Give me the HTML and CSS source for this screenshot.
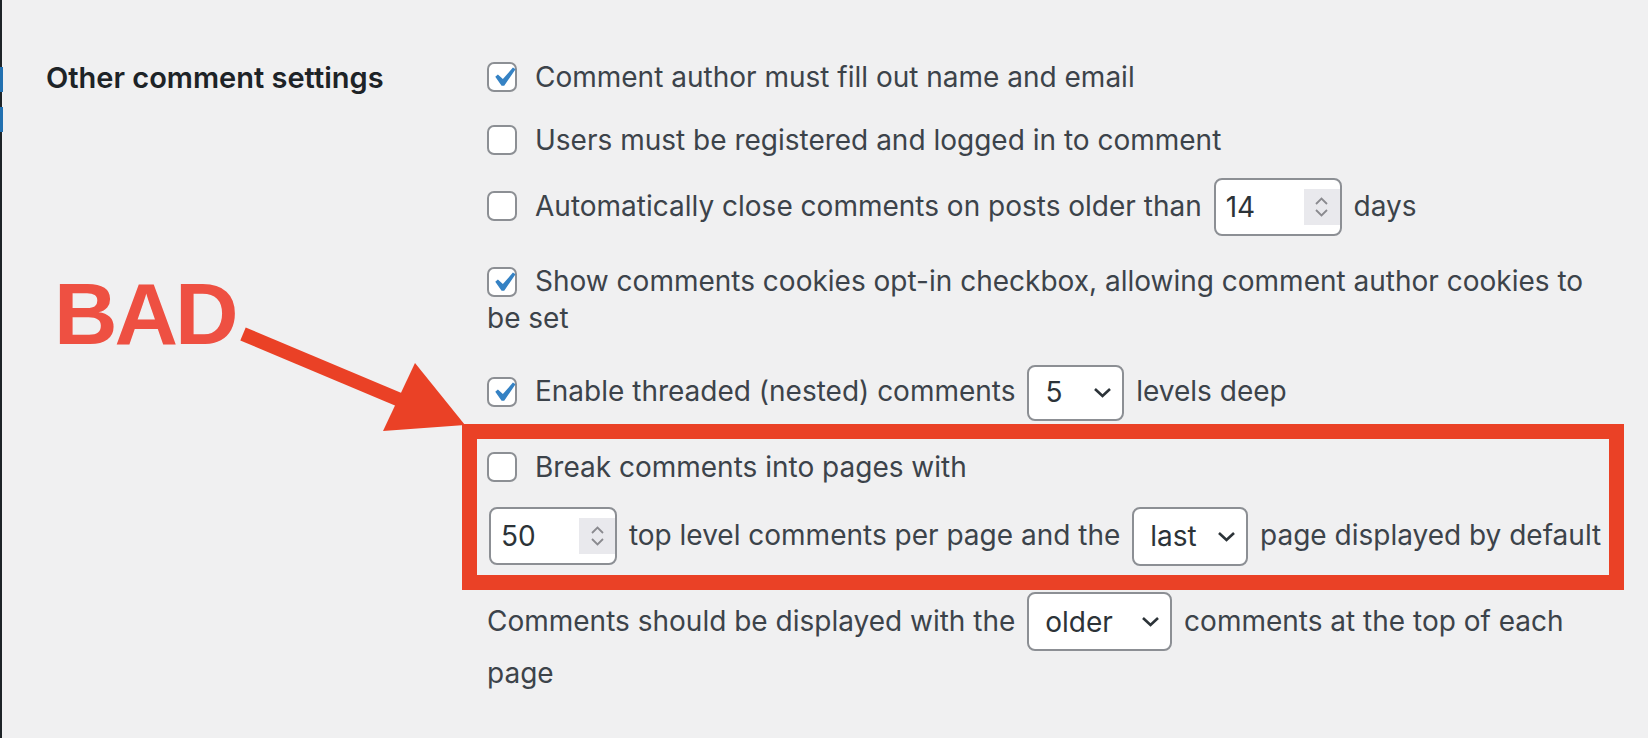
FILE: index.html
```html
<!DOCTYPE html>
<html lang="en">
<head>
  <meta charset="UTF-8" />
  <title>Discussion Settings</title>
  <link rel="stylesheet" href="styles.css">
</head>
<body>
  <div class="wrap">
    <div class="admin-edge">
      <span class="edge-mark"></span>
      <span class="edge-mark"></span>
    </div>

    <div class="form-table">
      <div class="row-title">Other comment settings</div>

      <div class="fieldset">
        <label class="opt gap-26">
          <span class="checkbox"><svg class="tick" viewBox="0 0 20 20"><path d="M14.83 4.89l1.34.94-5.81 8.38H9.02L5.78 9.67l1.34-1.25 2.57 2.4z"/></svg></span>Comment author must fill out name and email
        </label>

        <label class="opt gap-29">
          <span class="checkbox"></span>Users must be registered and logged in to comment
        </label>

        <label class="opt gap-37">
          <span class="checkbox"></span>Automatically close comments on posts older than
          <span class="number-input">14<span class="spin">
            <svg width="15" height="10" viewBox="0 0 15 10"><path d="M2 8 L7.5 2.5 L13 8" fill="none" stroke="#8a8a8f" stroke-width="1.8"/></svg>
            <svg width="15" height="10" viewBox="0 0 15 10"><path d="M2 2 L7.5 7.5 L13 2" fill="none" stroke="#8a8a8f" stroke-width="1.8"/></svg>
          </span></span>
          days
        </label>

        <label class="opt gap-36">
          <span class="checkbox"><svg class="tick" viewBox="0 0 20 20"><path d="M14.83 4.89l1.34.94-5.81 8.38H9.02L5.78 9.67l1.34-1.25 2.57 2.4z"/></svg></span>Show comments cookies opt-in checkbox, allowing comment author cookies to be set
        </label>

        <label class="opt gap-37">
          <span class="checkbox"><svg class="tick" viewBox="0 0 20 20"><path d="M14.83 4.89l1.34.94-5.81 8.38H9.02L5.78 9.67l1.34-1.25 2.57 2.4z"/></svg></span>Enable threaded (nested) comments
          <span class="select select-depth">5<svg width="19" height="11" viewBox="0 0 19 11"><path d="M2 2 L9.5 9 L17 2" fill="none" stroke="#2c3338" stroke-width="2.6"/></svg></span>
          levels deep
        </label>

        <label class="opt gap-31">
          <span class="checkbox"></span>Break comments into pages with
        </label>

        <div class="opt gap-39 nowrap">
          <span class="number-input first">50<span class="spin">
            <svg width="15" height="10" viewBox="0 0 15 10"><path d="M2 8 L7.5 2.5 L13 8" fill="none" stroke="#8a8a8f" stroke-width="1.8"/></svg>
            <svg width="15" height="10" viewBox="0 0 15 10"><path d="M2 2 L7.5 7.5 L13 2" fill="none" stroke="#8a8a8f" stroke-width="1.8"/></svg>
          </span></span>
          top level comments per page and the
          <span class="select select-page">last<svg width="19" height="11" viewBox="0 0 19 11"><path d="M2 2 L9.5 9 L17 2" fill="none" stroke="#2c3338" stroke-width="2.6"/></svg></span>
          page displayed by default
        </div>

        <div class="opt tall">
          <span>Comments should be displayed with the</span>
          <span class="select select-order">older<svg width="19" height="11" viewBox="0 0 19 11"><path d="M2 2 L9.5 9 L17 2" fill="none" stroke="#2c3338" stroke-width="2.6"/></svg></span>
          <span>comments at the top of each</span> <span>page</span>
        </div>
      </div>
    </div>

    <!-- annotation drawn over the screenshot -->
    <div class="note-text">BAD</div>
    <svg class="note-arrow" width="1648" height="738" viewBox="0 0 1648 738">
      <polygon points="245.7,327.5 240.3,340.5 397.3,406.5 402.7,393.5" />
      <polygon points="465,425 383,431 415,363" />
    </svg>
    <div class="note-box"></div>
  </div>
</body>
</html>
```

FILE: styles.css
```css
body {
  margin: 0;
  background: #f0f0f1;
  font-family: Inter, "Noto Sans", sans-serif;
  color: #3c434a;
}

.wrap {
  position: relative;
  display: flex;
  height: 738px;
  overflow: hidden;
}

/* dark admin menu edge on the left */
.admin-edge {
  width: 2px;
  flex-shrink: 0;
  background: #1d2327;
  padding-top: 67px;
  display: flex;
  flex-direction: column;
  gap: 15px;
}

.edge-mark {
  width: 3px;
  height: 25px;
  background: #2271b1;
}

.form-table {
  display: flex;
  padding-left: 44px;
}

.row-title {
  width: 441px;
  padding-top: 59px;
  font-size: 29px;
  line-height: 37px;
  font-weight: 600;
  color: #1d2327;
}

.fieldset {
  width: 1125px;
  padding-top: 59px;
  font-size: 28px;
  line-height: 37px;
}

.opt {
  display: block;
}

.gap-26 { margin-bottom: 26px; }
.gap-29 { margin-bottom: 29px; }
.gap-31 { margin-bottom: 31px; }
.gap-36 { margin-bottom: 36px; }
.gap-37 { margin-bottom: 37px; }
.gap-39 { margin-bottom: 39px; }

.opt.tall {
  line-height: 52px;
}

.nowrap {
  white-space: nowrap;
}

.checkbox {
  position: relative;
  display: inline-block;
  box-sizing: border-box;
  width: 30px;
  height: 30px;
  margin: -4px 18px 0 0;
  border: 2px solid #8c8f94;
  border-radius: 7px;
  background: #fff;
  vertical-align: middle;
}

.tick {
  position: absolute;
  left: -5px;
  top: -6px;
  width: 39px;
  height: 39px;
  fill: #3582c4;
}

.number-input {
  display: inline-flex;
  align-items: center;
  box-sizing: border-box;
  width: 128px;
  height: 58px;
  margin: -12px 4px -10px;
  padding-left: 10px;
  border: 2px solid #8c8f94;
  border-radius: 8px;
  background: #fff;
  color: #2c3338;
  vertical-align: middle;
}

.number-input.first {
  margin-left: 2px;
}

.spin {
  margin-left: auto;
  width: 36px;
  height: 36px;
  background: #e9e9ed;
  display: flex;
  flex-direction: column;
  align-items: center;
  justify-content: center;
  gap: 2px;
}

.select {
  display: inline-flex;
  align-items: center;
  justify-content: space-between;
  box-sizing: border-box;
  height: 56px;
  margin: -11px 4px -9px;
  padding: 0 10px 0 16px;
  border: 2px solid #8c8f94;
  border-radius: 8px;
  background: #fff;
  color: #2c3338;
  vertical-align: middle;
}

.select-depth { width: 97px; }

.select-page,
.select-order {
  height: 59px;
  margin-top: -12px;
  margin-bottom: -10px;
}

.select-page { width: 116px; }
.select-order { width: 145px; }

/* red annotation */
.note-text {
  position: absolute;
  left: 54px;
  top: 264px;
  font-family: "Liberation Sans", Arial, sans-serif;
  font-weight: bold;
  font-size: 88px;
  line-height: 100px;
  letter-spacing: -3px;
  color: #ee5042;
}

.note-arrow {
  position: absolute;
  left: 0;
  top: 0;
  fill: #ea4126;
}

.note-box {
  position: absolute;
  left: 462px;
  top: 424px;
  width: 1162px;
  height: 166px;
  box-sizing: border-box;
  border: 15px solid #ea4126;
}
```
